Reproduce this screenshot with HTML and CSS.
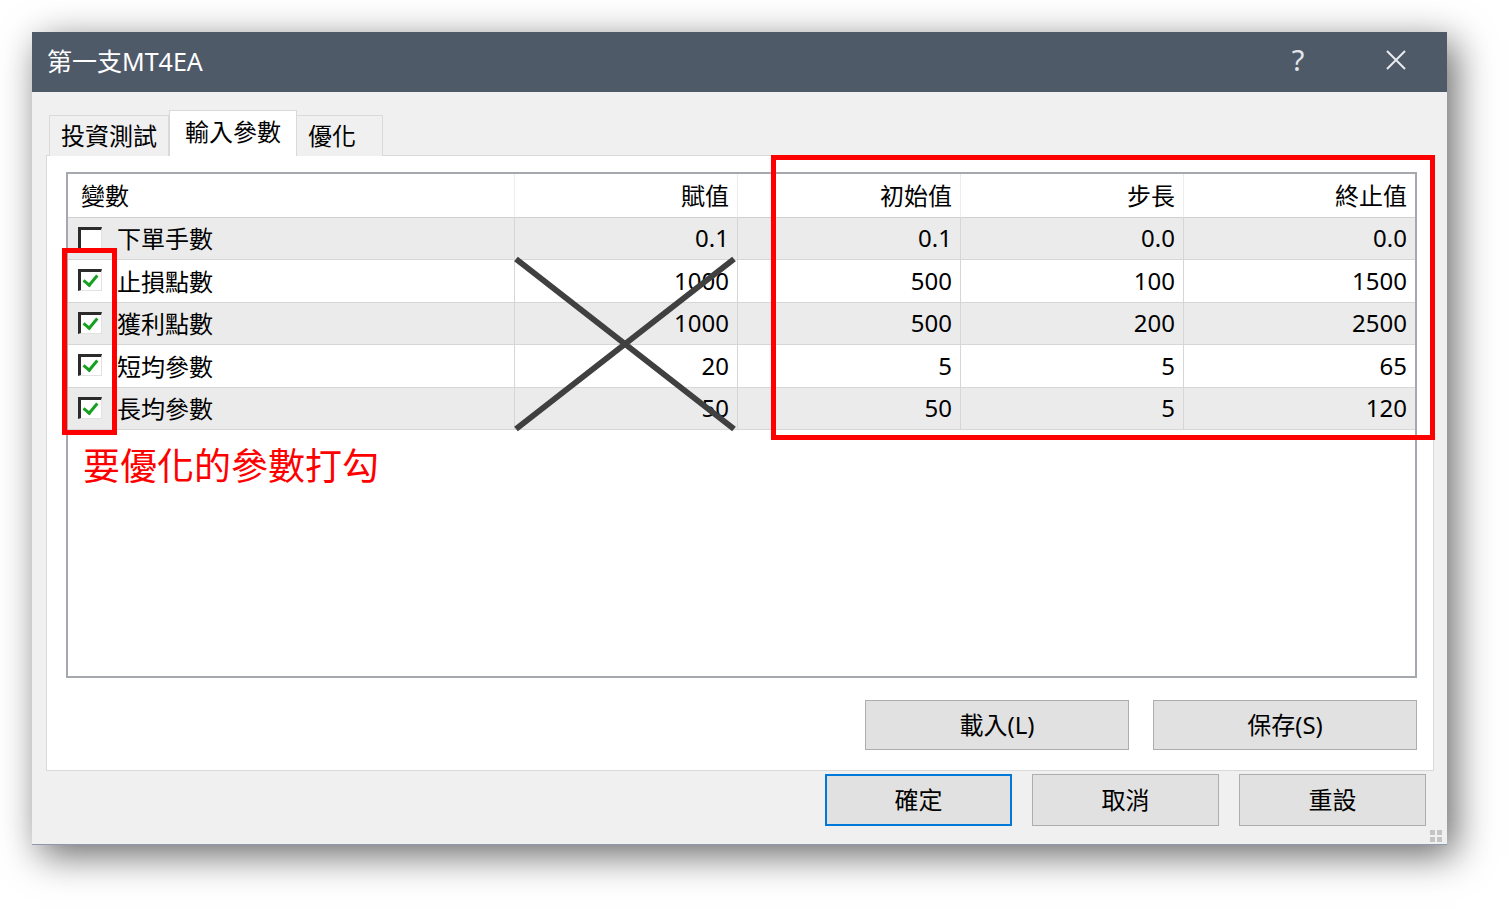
FILE: index.html
```html
<!DOCTYPE html>
<html lang="zh-Hant">
<head>
    <meta charset="UTF-8">
    <title>第一支MT4EA</title>
    <link rel="stylesheet" href="styles.css">
</head>
<body>
    <div class="stage">
        <div class="window">
            <div class="titlebar">
                <span class="title">第一支MT4EA</span>
                <span class="help">?</span>
                <span class="close">
                    <svg width="20" height="20" viewBox="0 0 20 20"><path d="M1 1L19 19M19 1L1 19" stroke="#e9ebee" stroke-width="2" fill="none"/></svg>
                </span>
            </div>

            <div class="client">
                <div class="tabs">
                    <div class="tab">投資測試</div>
                    <div class="tab active">輸入參數</div>
                    <div class="tab">優化</div>
                </div>

                <div class="panel">
                    <div class="grid">
                        <div class="row head">
                            <div class="cell name">變數</div>
                            <div class="cell num">賦值</div>
                            <div class="cell num">初始值</div>
                            <div class="cell num">步長</div>
                            <div class="cell num">終止值</div>
                        </div>
                        <div class="row alt">
                            <div class="cell name"><span class="chk"></span>下單手數</div>
                            <div class="cell num">0.1</div>
                            <div class="cell num">0.1</div>
                            <div class="cell num">0.0</div>
                            <div class="cell num">0.0</div>
                        </div>
                        <div class="row">
                            <div class="cell name"><span class="chk on"></span>止損點數</div>
                            <div class="cell num">1000</div>
                            <div class="cell num">500</div>
                            <div class="cell num">100</div>
                            <div class="cell num">1500</div>
                        </div>
                        <div class="row alt">
                            <div class="cell name"><span class="chk on"></span>獲利點數</div>
                            <div class="cell num">1000</div>
                            <div class="cell num">500</div>
                            <div class="cell num">200</div>
                            <div class="cell num">2500</div>
                        </div>
                        <div class="row">
                            <div class="cell name"><span class="chk on"></span>短均參數</div>
                            <div class="cell num">20</div>
                            <div class="cell num">5</div>
                            <div class="cell num">5</div>
                            <div class="cell num">65</div>
                        </div>
                        <div class="row alt">
                            <div class="cell name"><span class="chk on"></span>長均參數</div>
                            <div class="cell num">50</div>
                            <div class="cell num">50</div>
                            <div class="cell num">5</div>
                            <div class="cell num">120</div>
                        </div>
                        <p class="note">要優化的參數打勾</p>
                    </div>

                    <div class="panel-actions">
                        <button class="btn wide">載入(L)</button>
                        <button class="btn wide">保存(S)</button>
                    </div>
                </div>

                <div class="dialog-actions">
                    <button class="btn default">確定</button>
                    <button class="btn">取消</button>
                    <button class="btn">重設</button>
                </div>
            </div>

            <!-- annotations drawn over the dialog -->
            <svg class="cross" width="224" height="176" viewBox="0 0 224 176">
                <path d="M3 3L221 173M221 3L3 173" stroke="#404040" stroke-width="6" fill="none"/>
            </svg>
            <div class="redbox cols"></div>
            <div class="redbox checks"></div>
            <div class="grip"><i></i><i></i><i></i><i></i></div>
        </div>
    </div>
</body>
</html>
```

FILE: styles.css
```css
body {
    margin: 0;
    background-color: #ffffff;
    font-family: "Noto Sans", "Noto Sans CJK TC", sans-serif;
    color: #000;
}
.stage {
    padding: 32px 0 70px 32px;
}
.window {
    position: relative;
    width: 1415px;
    background-color: #f0f0f0;
    border-bottom: 1px solid #8d9aac;
    box-shadow: 8px 10px 36px rgba(0,0,0,0.6);
}
.titlebar {
    display: flex;
    align-items: center;
    box-sizing: border-box;
    height: 60px;
    padding: 0 0 5px 15px;
    background-color: #4f5a69;
    color: #ffffff;
    font-size: 25px;
}
.title {
    flex: 1;
}
.help {
    width: 46px;
    text-align: center;
    color: #e3e6ea;
    font-size: 29px;
}
.close {
    display: flex;
    justify-content: center;
    width: 46px;
    margin: 0 28px 0 52px;
}
.client {
    padding: 18px 13px 18px 14px;
}
.tabs {
    display: flex;
    align-items: flex-end;
    margin-left: 3px;
    margin-bottom: -1px;
    position: relative;
    z-index: 1;
}
.tab {
    box-sizing: border-box;
    height: 41px;
    min-width: 86px;
    padding: 0 11px;
    border: 1px solid #d9d9d9;
    border-bottom: none;
    background-color: #f0f0f0;
    font-size: 24px;
    line-height: 40px;
}
.tab + .tab {
    border-left: none;
}
.tab.active {
    height: 46px;
    padding: 0 15px;
    background-color: #ffffff;
    line-height: 42px;
    border-left: 1px solid #d9d9d9;
}
.panel {
    background-color: #ffffff;
    border: 1px solid #d9d9d9;
    padding: 16px 16px 20px 19px;
}
.grid {
    box-sizing: border-box;
    height: 506px;
    border: 2px solid #a5a9ae;
    background-color: #ffffff;
}
.row {
    display: grid;
    grid-template-columns: 447px 223px 223px 223px 231px;
    height: 43px;
    font-size: 24px;
}
.row.alt {
    height: 42px;
}
.row .cell {
    display: flex;
    align-items: center;
    padding-bottom: 2px;
    border-right: 1px solid #d6d6d6;
    border-bottom: 1px solid #d6d6d6;
}
.row.alt .cell {
    background-color: #ebebeb;
}
.row.head {
    height: 44px;
}
.row.head .cell {
    border-right-color: #ececec;
    border-bottom-color: #cfcfcf;
}
.row .cell:last-child {
    border-right: none;
}
.cell.name {
    padding-left: 10px;
}
.head .cell.name {
    padding-left: 13px;
}
.cell.num {
    justify-content: flex-end;
    padding-right: 8px;
}
.chk {
    box-sizing: border-box;
    position: relative;
    width: 24px;
    height: 22px;
    margin-right: 15px;
    background-color: #ffffff;
    border-top: 3px solid #2b2b2b;
    border-left: 3px solid #2b2b2b;
    border-right: 1px solid #e2e2e2;
    border-bottom: 1px solid #e2e2e2;
}
.chk.on::after {
    content: "";
    position: absolute;
    left: 5px;
    top: 0px;
    width: 6px;
    height: 11px;
    border-right: 3px solid #16a020;
    border-bottom: 3px solid #16a020;
    transform: rotate(40deg);
}
.note {
    margin: 14px 0 0 15px;
    font-size: 37px;
    line-height: 44px;
    color: #ff0000;
}
.panel-actions {
    display: flex;
    justify-content: flex-end;
    gap: 24px;
    margin-top: 22px;
}
.btn {
    box-sizing: border-box;
    height: 52px;
    width: 187px;
    background-color: #e1e1e1;
    border: 1px solid #adadad;
    font-family: "Noto Sans", "Noto Sans CJK TC", sans-serif;
    font-size: 24px;
    color: #000;
    padding: 0 0 3px;
}
.btn.wide {
    width: 264px;
    height: 50px;
}
.btn.default {
    border: 2px solid #0078d7;
}
.dialog-actions {
    display: flex;
    justify-content: flex-end;
    gap: 20px;
    margin-top: 3px;
    padding-right: 8px;
}
.cross {
    position: absolute;
    left: 481px;
    top: 224px;
}
.redbox {
    position: absolute;
    box-sizing: border-box;
    border: 5px solid #ff0000;
}
.redbox.cols {
    left: 739px;
    top: 123px;
    width: 664px;
    height: 285px;
}
.redbox.checks {
    left: 30px;
    top: 216px;
    width: 55px;
    height: 187px;
}
.grip {
    position: absolute;
    right: 5px;
    bottom: 2px;
    display: grid;
    grid-template-columns: 5px 5px;
    gap: 2px;
}
.grip i {
    width: 5px;
    height: 5px;
    background-color: #c4c4c4;
}
```
